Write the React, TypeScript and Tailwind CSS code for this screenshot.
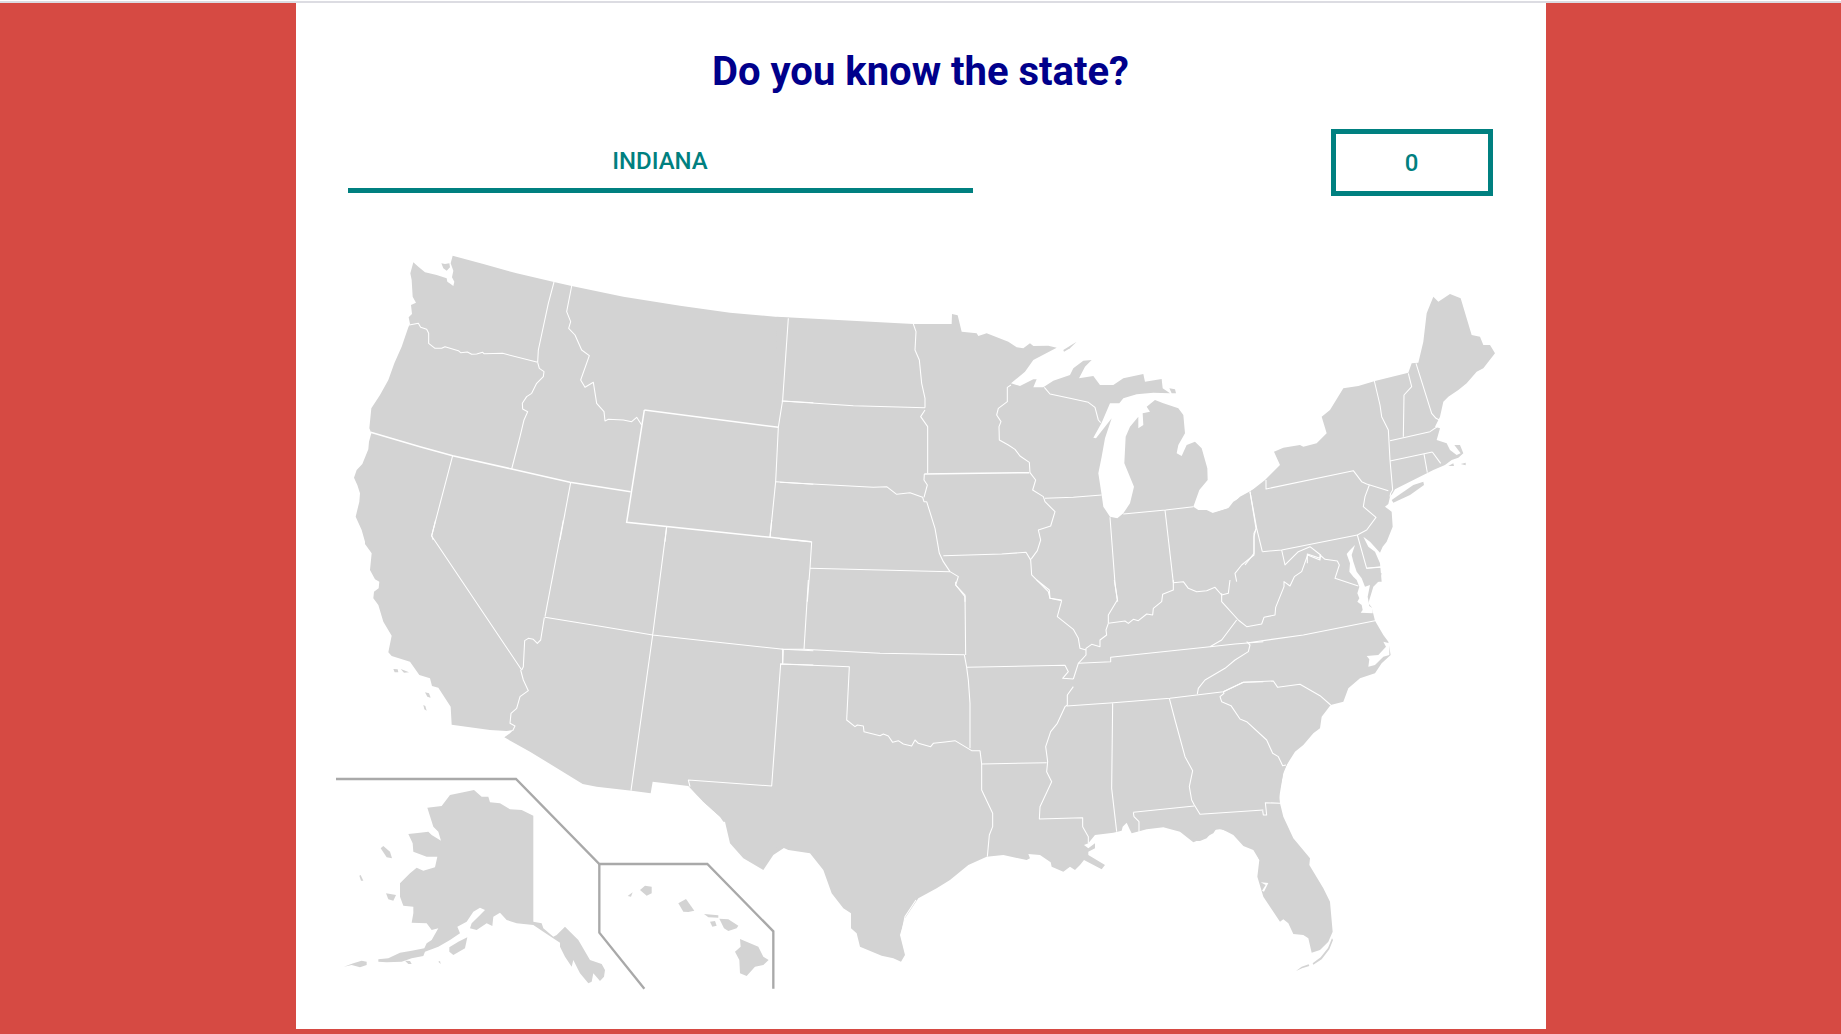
type Group = { x: number; y: number; land?: string[]; white?: string[]; lines?: string[]; thick?: string[]; inset?: string[] };

const groups: Group[] = [
  {
    x: 330, y: 240,
    land: [
      "368,47 460,72 560,100 672,126 725,138 880,170 1050,197 1200,218 1375,234 1450,240 1450,905 105,905 95,870 77,830 88,785 90,760 82,735 72,713 80,690 97,672 115,628 117,605 124,580 118,565 124,505 150,465 175,420 193,370 215,320 235,262 240,252 236,232 246,222 243,195 258,188 248,170 245,120 241,100 250,67 265,80 285,97 320,105 350,115 352,125 362,132 370,138 373,125 366,112 370,92 362,70",
      "334,70 345,72 358,70 360,82 350,92 340,85",
    ],
    lines: [
      "238,255 265,250 272,262 290,268 296,280 296,310 315,325 335,325 345,320 385,332 392,338 412,336 425,343 440,342 458,337 462,341 518,340 623,367",
      "672,126 655,190 625,330 623,367",
      "623,367 628,385 642,395 640,410 620,430 605,460 590,470 577,490 578,507 593,515 582,540 570,590 545,687",
      "725,138 710,215 722,245 716,265 735,285 755,330 778,347 752,420 765,442 790,427 800,490 822,515 825,543 835,538 880,540 905,545 920,532 935,555",
      "368,647 305,887 310,900",
      "722,727 690,900",
      "1375,235 1358,480 1345,562 1337,725 1320,892",
      "1358,483 1450,488",
      "1337,725 1450,733",
      "1010,860 1005,905",
    ],
    thick: [
      "122,577 270,620 368,647 545,687 720,727 902,755",
      "943,510 1345,562",
      "943,510 890,847 1320,892 1443,905",
    ],
  },
  {
    x: 330, y: 520,
    land: [
      "85,-10 105,40 105,72 125,100 120,150 135,178 148,185 146,205 132,215 130,235 145,255 160,305 185,347 175,397 185,408 240,425 268,465 300,475 306,498 325,503 362,560 365,614 480,630 530,633 550,630 540,640 523,652 600,695 758,792 800,800 905,812 962,820 968,785 1075,798 1100,825 1120,845 1170,890 1180,905 1450,905 1450,-10",
      "190,447 203,448 205,457 194,457",
      "212,447 237,457 222,458",
      "285,517 297,520 302,533 292,530",
      "280,555 286,558 290,572 283,568",
    ],
    lines: [
      "317,0 305,48 575,450",
      "572,450 580,480 595,512 570,530 560,565 543,580 540,610 555,618 548,632",
      "643,292 632,360 622,370 610,358 595,355 584,362 580,440 575,450",
      "700,0 645,290",
      "645,292 820,320 968,345 1150,365 1360,388 1450,392",
      "1010,20 968,345 903,812",
      "1325,0 1320,52",
      "1360,388 1358,432",
      "1450,435 1352,432 1325,798 1075,780 1080,800",
    ],
  },
  {
    x: 330, y: 760,
    land: [
      "1075,60 1100,100 1120,125 1170,170 1185,185 1200,250 1240,295 1300,330 1330,285 1365,262 1450,280 1450,0 1075,0",
      "292,143 335,138 360,105 400,97 432,90 455,110 475,110 480,127 510,130 540,148 575,150 610,167 610,485 635,490 640,505 670,530 680,525 705,500 720,515 745,540 780,600 815,612 825,630 822,650 810,663 790,640 785,665 775,670 750,640 745,630 730,600 725,620 705,590 690,560 690,548 640,515 610,495 560,490 530,480 510,458 490,470 487,498 470,490 440,510 420,505 425,490 445,470 465,450 450,443 430,455 410,485 382,500 390,520 360,540 325,560 285,575 280,588 245,595 215,605 170,607 145,605 145,598 175,595 210,578 245,572 283,565 290,550 305,540 325,505 305,510 290,490 245,488 250,460 250,440 220,437 210,410 210,370 240,340 260,323 280,332 315,322 322,290 290,290 250,275 248,250 235,222 270,218 295,215 305,225 333,242 325,215 310,200",
      "358,562 385,545 412,532 405,565 370,585 358,575",
      "152,265 160,258 180,275 186,295 170,292",
      "168,400 198,405 190,422 175,418",
      "88,347 92,345 100,362 93,362",
      "42,620 70,610 95,602 110,605 110,615 90,622 65,615",
      "225,602 240,603 245,612 235,612",
      "325,605 330,603 332,612",
      "893,408 908,397 903,410",
      "930,390 945,377 965,380 965,400 950,407",
      "1045,430 1068,417 1093,452 1075,456 1060,455",
      "1122,462 1165,466 1165,473 1135,472",
      "1140,485 1155,483 1160,497 1147,500",
      "1168,476 1195,478 1225,497 1220,505 1195,513 1182,505",
      "1230,537 1285,560 1300,590 1316,600 1300,615 1275,620 1250,648 1230,640 1228,600 1215,575 1232,560",
    ],
    inset: [
      "18,57 558,57 808,312 1132,312 1330,514 1330,686",
      "808,312 808,518 943,686",
    ],
  },
  {
    x: 780, y: 300,
    land: [
      "-10,50 400,72 515,72 516,42 533,46 545,95 590,100 595,108 620,100 685,125 710,142 730,145 750,130 760,138 805,137 830,143 760,180 735,215 693,250 720,258 760,238 770,238 760,262 790,262 820,242 870,225 880,205 910,182 935,180 915,200 897,235 940,228 960,255 1000,255 1030,235 1090,222 1095,245 1145,237 1148,265 1170,280 1120,278 1070,283 1030,295 1018,310 990,310 965,368 940,413 948,415 995,355 975,415 965,470 955,520 965,585 970,620 990,650 1012,655 1030,640 1050,610 1062,560 1033,490 1037,410 1050,380 1075,350 1075,385 1090,375 1088,340 1110,335 1100,320 1125,300 1150,310 1195,325 1210,345 1215,400 1195,435 1190,460 1205,468 1220,435 1245,425 1265,445 1282,505 1283,540 1258,570 1240,620 1255,630 1280,630 1300,640 1345,625 1380,590 1450,552 1450,905 -10,905",
      "850,150 890,125 870,145 852,155",
      "1168,265 1185,268 1188,280 1175,280",
    ],
    lines: [
      "400,72 408,95 405,150 418,180 425,250 435,295 435,323",
      "5,303 220,317 435,323",
      "435,330 422,350 443,380 443,520",
      "0,547 280,562 320,560 350,583 390,578 428,592 432,605 440,605",
      "433,522 432,540 442,555 432,592",
      "440,605 465,685 478,760 490,785 510,815 535,830 527,855 555,890 555,905",
      "0,717 95,725 90,805 82,905",
      "90,805 510,815",
      "793,262 810,282 870,295 925,307 945,322 955,360 962,368",
      "693,255 682,262 682,305 655,325 650,345 663,365 657,380 658,420 685,435 705,448 720,468 748,487 750,518",
      "750,518 767,540 758,570 790,590 795,605 825,635 812,678 775,690 782,720 772,752 755,775 750,780",
      "795,595 880,592 965,585",
      "490,767 665,762 738,757 752,780 755,825 805,875 810,895 845,900",
      "990,652 1005,850 1013,905",
      "1030,642 1157,630 1240,620",
      "1155,630 1180,848",
      "1410,575 1428,685 1422,710 1422,760 1395,795",
    ],
    thick: ["433,522 748,518"],
  },
  {
    x: 1200, y: 280,
    land: [
      "150,635 195,600 240,555 222,515 250,503 300,495 310,500 350,490 380,460 365,410 390,390 430,325 475,318 525,303 625,278 635,250 655,248 670,185 680,100 700,50 715,65 750,42 782,55 815,165 840,170 850,195 870,195 885,220 850,265 830,275 800,310 775,330 745,350 730,365 720,410 705,440 720,445 710,480 740,490 750,510 770,525 782,520 763,495 780,495 790,520 775,533 755,540 735,555 700,570 585,628 578,640 570,650 565,672 555,680 575,695 578,740 560,785 548,800 540,818 510,785 490,770 505,800 525,815 540,850 545,905 -10,905 -10,693 0,693 35,700 85,685 100,665",
      "575,660 640,615 670,605 672,615 630,645 580,668",
      "745,558 760,550 762,558",
      "782,552 797,548 797,556",
    ],
    lines: [
      "198,600 198,627 460,572 485,605 500,612 565,632",
      "508,615 495,650 490,680 528,712 500,750 472,765",
      "187,815 245,810 472,765",
      "150,635 170,745 187,815",
      "170,745 162,760 162,825 125,855 105,880 110,905",
      "523,303 540,375 545,410 565,450 570,540 578,630 572,640 570,650",
      "625,280 635,320 612,345 610,470",
      "648,250 695,400 708,415 718,420",
      "570,482 690,455 715,438",
      "570,543 697,516",
      "672,522 682,578",
      "697,516 722,550",
      "245,810 255,855 295,815 330,800 362,825 360,835 322,822 322,850",
      "472,765 500,865 543,860",
    ],
  },
  {
    x: 780, y: 580,
    land: [
      "-10,-10 1450,-10 1450,830 1438,840 1425,810 1380,780 1350,755 1310,745 1300,760 1270,775 1240,787 1200,755 1150,742 1100,748 1055,760 1050,750 1040,728 1028,740 1025,752 1000,758 945,765 925,790 912,795 925,805 945,790 945,805 925,815 925,825 975,855 965,868 912,840 900,855 885,870 870,860 850,875 815,860 812,847 780,825 745,822 750,835 740,840 670,825 620,830 565,855 510,900 470,925 415,955 375,1015 360,1065 375,1125 363,1145 340,1135 305,1127 240,1100 230,1060 213,1045 213,1000 190,985 155,940 130,870 90,820 25,810 10,803 -10,810",
    ],
    lines: [
      "5,208 70,208 300,220 553,224",
      "8,208 8,250",
      "0,252 208,260 200,420 225,440 232,435 250,438 252,455 300,467 310,462 325,468 338,487 355,482 370,492 395,498 405,480 415,490 452,500 460,490 495,486 525,482 575,512 600,512",
      "553,224 560,262 565,300 570,370 570,505",
      "527,5 527,15 555,45 557,225",
      "85,0 72,208",
      "560,262 855,256 865,275 848,295 880,297",
      "770,0 808,30 810,55 845,62 832,110 880,148 895,175 900,205 918,210",
      "880,297 895,250 918,225 918,205 935,193 960,200 960,180 980,165 978,150 985,130",
      "1003,0 1012,60 985,105 985,130",
      "985,130 1035,123 1045,130 1060,118 1075,122 1100,102 1118,105 1120,85 1145,65 1148,43 1180,30 1180,0",
      "1180,8 1210,5 1225,25 1250,35 1280,32 1305,22 1325,45 1345,40 1350,0",
      "1325,40 1325,65 1375,120",
      "1290,200 1325,180 1370,120",
      "895,250 992,245 992,232 1290,200 1365,192 1450,185",
      "1400,185 1410,195 1405,215 1365,240 1335,265 1275,300 1255,325 1252,342",
      "860,378 1000,368 1170,355 1330,335 1390,307 1450,305",
      "1168,355 1185,420 1215,530 1238,572 1228,620 1235,660 1243,675 1260,703 1450,690",
      "1060,697 1243,678",
      "1060,697 1062,710 1077,725 1077,755",
      "998,370 995,625 1010,755",
      "880,320 862,345 862,375 855,380 832,430 812,455 797,500 803,545 800,575 815,605 780,680 778,717 908,713 908,740 925,770 925,790",
      "605,552 800,548",
      "600,512 605,552 605,630 638,700 638,740 628,765 622,830",
      "408,960 375,1010 365,1060 382,1130",
    ],
  },
  {
    x: 1100, y: 500,
    land: [
      "-10,220 845,220 840,240 820,260 805,310 815,322 825,362 850,405 865,425 872,465 845,490 825,520 780,535 745,565 730,605 692,615 665,650 660,685 640,700 610,735 585,755 560,795 550,815 538,890 535,910 -10,910",
    ],
    white: [
      "850,425 858,440 835,465 800,468 808,478 805,500 825,495 850,470 868,465 868,430",
    ],
    lines: [
      "623,165 660,180 660,165",
      "623,165 605,215 583,230 570,258 552,245 552,260 527,322 525,345 492,352 485,372 440,380 415,360",
      "660,165 675,178 712,183 718,195 705,235 775,258",
      "692,615 660,587 600,553 533,562 520,543 430,547 370,575",
      "800,205 843,202",
      "445,428 610,405 825,362",
      "370,575 372,580 360,590 365,605 393,617 420,657 440,665 500,720 518,760 535,770 548,797 558,795",
    ],
  },
  {
    x: 1320, y: 530,
    white: [
      "105,45 88,62 80,72 90,100 88,125 100,140 110,150 118,170 112,190 118,205 112,215 125,225 128,240 122,248 158,250 158,235 148,228 143,200 150,165 135,170 125,145 110,125 100,95 95,75",
    ],
  },
  {
    x: 1200, y: 760,
    land: [
      "270,-10 250,40 237,100 240,130 250,170 280,235 330,295 328,315 370,385 390,425 398,515 385,545 360,570 335,578 325,535 310,525 280,522 265,490 250,478 240,485 190,410 175,360 172,350 178,300 160,270 130,258 100,225 65,207 42,210 20,235 0,243 -10,243 -10,-10",
      "396,535 399,540 388,568 365,598 340,614 338,610 362,592 384,564",
      "326,613 328,618 306,625 288,633 305,620",
    ],
    white: ["182,367 205,369 192,395 186,392 197,375"],
    lines: ["188,152 190,165 200,165 196,128 240,130"],
  },
];

function Layer({ g, children }: { g: Group; children: React.ReactNode }) {
  return <g transform={`translate(${g.x} ${g.y}) scale(0.33333)`}>{children}</g>;
}

function UsaMap() {
  return (
    <svg className="block w-[1250px] h-[833px]" viewBox="296 196 1250 833" aria-label="Map of the United States">
      {groups.map((g, i) => (
        <Layer g={g} key={`l${i}`}>
          {g.land?.map((p, j) => <polygon key={j} points={p} fill="#d3d3d3" />)}
        </Layer>
      ))}
      {groups.map((g, i) => (
        <Layer g={g} key={`w${i}`}>
          {g.white?.map((p, j) => <polygon key={j} points={p} fill="#ffffff" />)}
        </Layer>
      ))}
      {groups.map((g, i) => (
        <Layer g={g} key={`b${i}`}>
          {g.lines?.map((p, j) => (
            <polyline key={j} points={p} fill="none" stroke="#ffffff" strokeWidth={3.2} strokeLinejoin="round" />
          ))}
          {g.thick?.map((p, j) => (
            <polyline key={j} points={p} fill="none" stroke="#ffffff" strokeWidth={4.5} strokeLinejoin="miter" />
          ))}
          {g.inset?.map((p, j) => (
            <polyline key={j} points={p} fill="none" stroke="#a9a9a9" strokeWidth={7} strokeLinejoin="miter" />
          ))}
        </Layer>
      ))}
    </svg>
  );
}

export default function App() {
  return (
    <div className="h-[1034px] bg-white pt-px overflow-hidden font-['Roboto',sans-serif]">
      <div className="h-[1033px] bg-[#d64a43] border-t-2 border-[#dcdce2]">
        <main className="mx-auto w-[1250px] h-[1026px] bg-white flex flex-col">
          <h1 className="h-[126px] pt-[46px] text-center text-[40px] leading-[46px] font-bold text-[#00008b]">
            Do you know the state?
          </h1>
          <div className="flex items-start justify-between pl-[52px] pr-[53px] h-[67px]">
            <div className="w-[625px] h-[64px] border-b-[5px] border-[#008080] flex items-center justify-center pt-[4px] text-[24px] font-medium text-[#008080]">
              INDIANA
            </div>
            <div className="w-[162px] h-[67px] border-[5px] border-[#008080] flex items-center justify-center text-[24px] font-medium text-[#008080]">
              0
            </div>
          </div>
          <UsaMap />
        </main>
      </div>
    </div>
  );
}
